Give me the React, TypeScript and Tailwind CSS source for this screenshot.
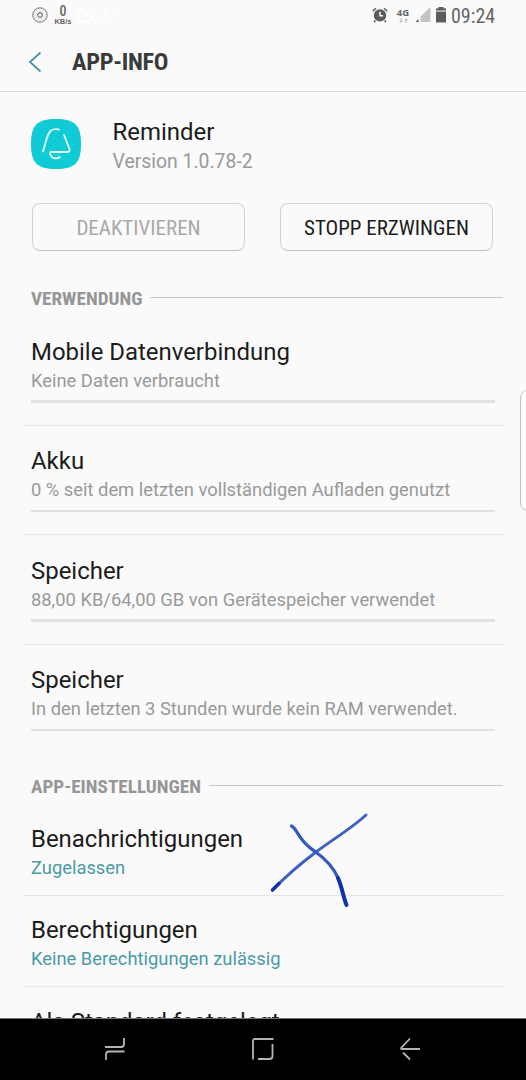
import React from 'react';

const usage = [
  { title: 'Mobile Datenverbindung', detail: 'Keine Daten verbraucht' },
  { title: 'Akku', detail: '0 % seit dem letzten vollständigen Aufladen genutzt' },
  { title: 'Speicher', detail: '88,00 KB/64,00 GB von Gerätespeicher verwendet' },
  { title: 'Speicher', detail: 'In den letzten 3 Stunden wurde kein RAM verwendet.' },
];

const settings = [
  { title: 'Benachrichtigungen', detail: 'Zugelassen' },
  { title: 'Berechtigungen', detail: 'Keine Berechtigungen zulässig' },
];

const condensed = "font-['Roboto_Condensed','Roboto',sans-serif] font-stretch-condensed";

const StatusBar: React.FC = () => (
  <div className="flex h-8 items-center justify-between pr-[34px] pl-8 text-[#666]">
    <div className="flex items-center">
      <svg className="-mt-[2px]" width="16" height="16" viewBox="0 0 16 16" fill="none" stroke="#777">
        <circle cx="8" cy="8" r="7.2" fill="#eee" strokeWidth="1" />
        <circle cx="8" cy="8" r="2.2" fill="#fafafa" strokeWidth="1.2" />
      </svg>
      <div className="-mt-px ml-[6px] flex w-[18px] flex-col items-center">
        <span className={`${condensed} text-[14px] leading-[13px] font-medium`}>0</span>
        <span className="font-['Liberation_Sans',sans-serif] text-[7.5px] leading-[8px] font-bold whitespace-nowrap">
          KB/s
        </span>
      </div>
      <svg className="-mt-[2px] ml-[5px]" width="17" height="17" viewBox="0 0 17 17" fill="none" stroke="#fff">
        <circle cx="8.5" cy="8.5" r="7" strokeWidth="2" strokeDasharray="32 12" />
        <path d="M8.5 4v5l4-3" strokeWidth="2" />
      </svg>
      <span className="ml-2 text-[17px] leading-5 text-white">6°</span>
    </div>
    <div className="flex items-center">
      <svg className="-mt-[2px] -ml-px" width="16" height="16" viewBox="0 0 16 16" fill="none">
        <circle cx="8" cy="8.4" r="6.2" fill="#5c5c5c" />
        <path d="M.8 4.2 4 1.2M15.2 4.2 12 1.2M3.5 13.4 2 15.2M12.5 13.4l1.5 1.8" stroke="#5c5c5c" strokeWidth="1.5" />
        <path d="M8 4.8v4h3" stroke="#fafafa" strokeWidth="1.5" />
      </svg>
      <div className="-mt-[2px] ml-[7px] flex w-[16px] flex-col items-center">
        <span className="font-['Open_Sans',sans-serif] text-[9.5px] leading-[10px] font-bold">4G</span>
        <svg width="9" height="5" viewBox="0 0 9 5" fill="none" stroke="#b4b4b4">
          <path d="M2 0v4M.5 2.6 2 4.2l1.5-1.6M7 5V1M5.5 2.4 7 .8l1.5 1.6" />
        </svg>
      </div>
      <svg className="-mt-[2px] ml-[4px]" width="16" height="16" viewBox="0 0 16 16">
        <path d="M15.5 0v15H5.5V9.5z" fill="#c4c4c4" />
        <path d="M3.5 12V15H.5z" fill="#555" />
      </svg>
      <svg className="-mt-[2px] ml-[4px]" width="12" height="16" viewBox="0 0 12 16">
        <path d="M1 1.5h10v4H1z" fill="#aaa" />
        <path d="M3.5 0h5v1.5H11V3H1V1.5h2.5zM1 5h10v10.5H1z" fill="#5c5c5c" />
      </svg>
      <span className={`${condensed} ml-[4px] w-[41px] text-[20px] leading-6 whitespace-nowrap`}>09:24</span>
    </div>
  </div>
);

const SectionTitle: React.FC<{ text: string }> = ({ text }) => (
  <div className="flex h-6 items-center pr-[23px] pl-[31px]">
    <h2 className={`${condensed} pt-px text-[19.2px] leading-6 font-bold whitespace-nowrap text-[#969696]`}>{text}</h2>
    <div className="mb-[2px] ml-2 h-px flex-1 bg-[#c8c8c8]" />
  </div>
);

const Row: React.FC<{ title: string; detail: string; link?: boolean }> = ({ title, detail, link }) => (
  <div className="px-2">
    <p className="text-[23.95px] leading-7 whitespace-nowrap text-[#1c1c1c]">{title}</p>
    <p className={`mt-[3px] text-[18.35px] leading-6 whitespace-nowrap ${link ? 'text-[#4a9aa6]' : 'text-[#999]'}`}>
      {detail}
    </p>
  </div>
);

const App: React.FC = () => {
  return (
    <div className="relative flex h-[1080px] w-[526px] flex-col overflow-hidden bg-[#fafafa] font-['Roboto',sans-serif]">
      <StatusBar />
      <header className="flex h-[60px] shrink-0 items-center border-b border-[#dcdcdc] pl-[28px]">
        <svg width="14" height="22" viewBox="0 0 14 22" fill="none" stroke="#4596a3" strokeWidth="1.8">
          <path d="M12.5 1.5 2 11l10.5 9.5" />
        </svg>
        <h1 className={`${condensed} ml-[30px] pt-px text-[24.3px] leading-7 font-bold tracking-[-0.3px] text-[#3a3a3a]`}>
          APP-INFO
        </h1>
      </header>

      <main className="min-h-0 flex-1 overflow-hidden">
        <div className="flex items-start pt-[26px] pl-[31px]">
          <svg className="mt-px" width="50" height="50" viewBox="0 0 50 50" fill="none">
            <path d="M25 0C44 0 50 6 50 25S44 50 25 50 0 44 0 25 6 0 25 0z" fill="#0fcbd6" />
            <g stroke="#e6fdff" strokeWidth="1.8" strokeLinecap="round" strokeLinejoin="round">
              <path d="M12 32.5C15 24 16 12 22 10.5Q26 9.5 28 10.8" />
              <path d="M33 16 38.5 30Q39.5 33 36 33H20.5Q18.5 33 19.5 36C21 40 26.5 40 29 38" />
            </g>
          </svg>
          <div className="ml-[31.5px]">
            <p className="text-[23.95px] leading-7 text-[#1c1c1c]">Reminder</p>
            <p className="mt-[3px] text-[19.4px] leading-[25px] text-[#999]">Version 1.0.78-2</p>
          </div>
        </div>

        <div className={`${condensed} mt-[29px] flex gap-[35px] pl-8 text-[21px]`}>
          <button className="h-12 w-[213px] rounded-lg border border-[#d2d2d2] border-b-[#c4c4c4] pt-[3px] text-[#a8a8a8]">
            DEAKTIVIEREN
          </button>
          <button className="h-12 w-[213px] rounded-lg border border-[#d2d2d2] border-b-[#c4c4c4] pt-[3px] text-[#1c1c1c]">
            STOPP ERZWINGEN
          </button>
        </div>

        <div className="mt-[35px]">
          <SectionTitle text="VERWENDUNG" />
          <div className="mt-[6px]">
            {usage.map((item, index) => (
              <div
                key={index}
                className={`mx-[23px] h-[109.5px] pt-[21.6px] ${index < 3 ? 'border-b border-[#e6e6e6]' : ''}`}
              >
                <Row title={item.title} detail={item.detail} />
                <div className="mx-2 mt-[7.9px] h-[2.5px] bg-[#e4dfe0]" />
              </div>
            ))}
          </div>
        </div>

        <div className="mt-[20px]">
          <SectionTitle text="APP-EINSTELLUNGEN" />
          <div className="mt-[6px]">
            {settings.map((item) => (
              <div key={item.title} className="mx-[23px] h-[91.5px] border-b border-[#e6e6e6] pt-[20.6px]">
                <Row title={item.title} detail={item.detail} link />
              </div>
            ))}
            <div className="mx-[23px] pt-[20.6px]">
              <Row title="Als Standard festgelegt" detail="" />
            </div>
          </div>
        </div>
      </main>

      <nav className="flex h-[62px] shrink-0 items-center justify-between border-t border-[#777] bg-black pr-[105px] pb-[2px] pl-[104px]">
        <svg width="22" height="24" viewBox="0 0 22 24" fill="none" stroke="#b4b4b4" strokeWidth="1.8">
          <path d="M1 10h16q3 0 3-3V1M20.5 14.5H5q-3 0-3 3V23" />
        </svg>
        <svg width="22" height="24" viewBox="0 0 22 24" fill="none" stroke="#b4b4b4" strokeWidth="1.8">
          <path d="M1 22.5V4q0-2 2-2h18.5M20.5 7v12q0 3-3 3H6" />
        </svg>
        <svg width="22" height="24" viewBox="0 0 22 24" fill="none" stroke="#b4b4b4" strokeWidth="1.8">
          <path d="M11 1.5 2.5 10.5Q1.5 12 3 12H21M4 15.5l7 7" />
        </svg>
      </nav>

      {/* edge panel handle */}
      <div className="absolute top-[390px] left-[520px] h-[121px] w-4 rounded-lg border border-[#c4c4c4] bg-[#fdfdfd]" />

      {/* pen marks */}
      <svg
        className="absolute top-[808px] left-[264px]"
        width="110"
        height="104"
        viewBox="264 808 110 104"
        fill="none"
        strokeLinecap="round"
      >
        <path d="M272.5 890C290 872 300 864 316 852S352 828 366 815" stroke="#3f62bf" strokeWidth="3" />
        <path d="M272.5 890 279 883.5" stroke="#0e33a4" strokeWidth="3.5" />
        <path d="M291.5 826C298 829 297 840 315 851.5C330 862 335 871 338 878" stroke="#3559bb" strokeWidth="3.3" />
        <path d="M338 878C342 887 343 896 346.5 905" stroke="#0c34a8" strokeWidth="4" />
      </svg>
    </div>
  );
};

export default App;
